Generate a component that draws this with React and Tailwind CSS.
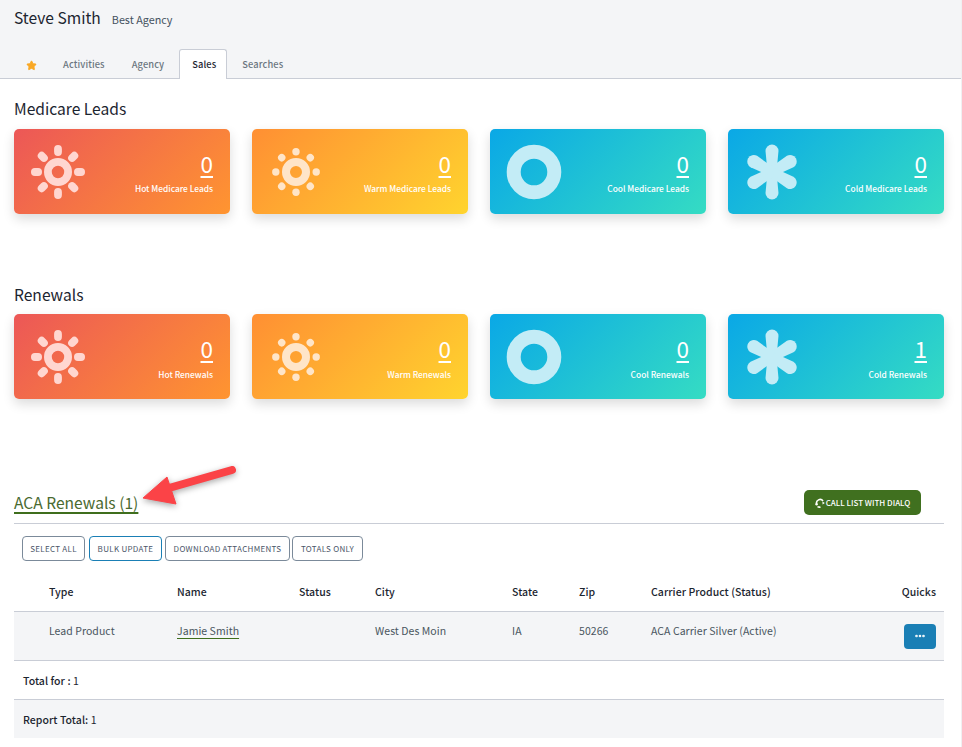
import React from 'react';
import { Star, Ellipsis } from 'lucide-react';

const HotIcon = () => (
  <svg width="56" height="56" viewBox="0 0 56 56" fill="#ffd6d0">
    <circle cx="28" cy="28" r="10.1" fill="none" stroke="#ffd6d0" strokeWidth="7.8" />
    {[0, 45, 90, 135, 180, 225, 270, 315].map((a) => (
      <rect key={a} x="24.1" y="1" width="7.8" height="11" rx="3.9" transform={`rotate(${a} 28 28)`} />
    ))}
  </svg>
);

const WarmIcon = () => (
  <svg width="50" height="50" viewBox="0 0 50 50" fill="#ffe5c8">
    <circle cx="25" cy="25" r="10" fill="none" stroke="#ffe5c8" strokeWidth="8" />
    {[0, 45, 90, 135, 180, 225, 270, 315].map((a) => (
      <circle key={a} cx="25" cy="4.8" r="3.7" transform={`rotate(${a} 25 25)`} />
    ))}
  </svg>
);

const CoolIcon = () => (
  <svg width="56" height="56" viewBox="0 0 56 56">
    <circle cx="28" cy="28" r="20.3" fill="none" stroke="#c3ecf6" strokeWidth="14" />
  </svg>
);

const ColdIcon = () => (
  <svg width="54" height="56" viewBox="0 0 54 56" fill="#c3ecf6">
    <circle cx="27" cy="28" r="10" />
    {[0, 60, 120, 180, 240, 300].map((a) => (
      <path key={a} d="M22.5 28 L20.5 7 A6.5 6.5 0 1 1 33.5 7 L31.5 28 Z" transform={`rotate(${a} 27 28)`} />
    ))}
  </svg>
);

const DialIcon = () => (
  <svg width="10" height="10" viewBox="0 0 10 10" fill="none" stroke="currentColor" strokeWidth="1.6">
    <path d="M1.6 6 A3.6 3.6 0 0 1 8 3" />
    <path d="M2.5 8.6 A3.6 3.6 0 0 0 5.5 9" />
    <circle cx="1.6" cy="6.2" r="1.2" fill="currentColor" stroke="none" />
    <path d="M7.4 3.4 L9.8 5 L7.6 6.6 Z" fill="currentColor" stroke="none" />
  </svg>
);

const Card = ({ gradient, icon, iconClass, count, label, labelGap }) => (
  <div className={`h-[85px] rounded-[5px] flex items-center justify-between pr-[17px] shadow-[0_5px_12px_rgba(0,0,0,0.14)] ${gradient} ${iconClass}`}>
    {icon}
    <div className="text-right text-white">
      <a href="#" className="block text-[22.5px] leading-[30px] underline underline-offset-[3px] decoration-[2px]">{count}</a>
      <div className={`text-[8.4px] leading-[14px] font-medium ${labelGap}`}>{label}</div>
    </div>
  </div>
);

const hot = 'bg-linear-135/srgb from-[#ec5757] to-[#ff9530]';
const warm = 'bg-linear-135/srgb from-[#ff8f33] to-[#ffd42e]';
const cool = 'bg-linear-135/srgb from-[#0aa8e6] to-[#35dcc3]';

const CardRow = ({ names, counts, labelGap }) => (
  <div className="grid grid-cols-4 gap-[22px]">
    <Card gradient={hot} iconClass="pl-[16px]" icon={<HotIcon />} count={counts[0]} label={names[0]} labelGap={labelGap} />
    <Card gradient={warm} iconClass="pl-[19px]" icon={<WarmIcon />} count={counts[1]} label={names[1]} labelGap={labelGap} />
    <Card gradient={cool} iconClass="pl-[16px]" icon={<CoolIcon />} count={counts[2]} label={names[2]} labelGap={labelGap} />
    <Card gradient={cool} iconClass="pl-[17px]" icon={<ColdIcon />} count={counts[3]} label={names[3]} labelGap={labelGap} />
  </div>
);

const Btn = ({ children, active, className }) => (
  <button className={`h-[25px] rounded-[4px] bg-white border text-[8px] tracking-[0.3px] text-[#4a5568] ${active ? 'border-[#1a7fb5]' : 'border-[#7b8a9a]'} ${className}`}>
    {children}
  </button>
);

export default function App() {
  return (
    <div className="relative w-[962px] h-[747px] overflow-hidden bg-white border-r border-[#f0f0f2] text-[#4a5560] font-['Noto_Sans_CJK_JP','Source_Sans_Pro',sans-serif]">
      {/* Header */}
      <header className="h-[79px] bg-[#f4f5f7] border-b border-[#c9cdd6] px-[14px]">
        <div className="flex items-baseline gap-[11px] pt-[5px]">
          <span className="text-[15.6px] leading-[24px] text-[#1c2530]">Steve Smith</span>
          <span className="text-[10.8px] text-[#45525f]">Best Agency</span>
        </div>
        <nav className="flex items-stretch mt-[20px] h-[30px] text-[9.3px] font-medium tracking-[0.1px] text-[#6b7580]">
          <div className="w-[35px] flex items-center justify-center pt-[2px]"><Star size={11} fill="#f9a825" stroke="#f9a825" /></div>
          <a href="#" className="px-[14px] pt-[2px] flex items-center">Activities</a>
          <a href="#" className="px-[13px] pt-[2px] flex items-center">Agency</a>
          <a href="#" className="ml-[2px] pl-[12px] pr-[10px] pt-[1px] h-[30px] flex items-center bg-white border border-b-0 border-[#c9cdd6] rounded-t-[3px] text-[#1c2530]">Sales</a>
          <a href="#" className="px-[15px] pt-[2px] flex items-center">Searches</a>
        </nav>
      </header>

      <main className="px-[14px] w-[958px]">
        <h2 className="mt-[18px] mb-[9px] text-[15.6px] leading-[23px] font-normal text-[#1c2530]">Medicare Leads</h2>
        <CardRow
          labelGap="mt-[3px]"
          names={['Hot Medicare Leads', 'Warm Medicare Leads', 'Cool Medicare Leads', 'Cold Medicare Leads']}
          counts={[0, 0, 0, 0]}
        />
        <h2 className="mt-[69px] mb-[9px] text-[15.6px] leading-[22px] font-normal text-[#1c2530]">Renewals</h2>
        <CardRow
          labelGap="mt-[4px]"
          names={['Hot Renewals', 'Warm Renewals', 'Cool Renewals', 'Cold Renewals']}
          counts={[0, 0, 0, 1]}
        />

        {/* ACA Renewals */}
        <div className="mt-[81px] h-[44px] flex items-center justify-between border-b border-[#c9cdd6] pr-[23px]">
          <a href="#" className="mt-[2px] text-[15.6px] text-[#4a6a30] underline decoration-[#3f6e1d] decoration-[2px] underline-offset-[3px]">ACA Renewals (1)</a>
          <button className="h-[25px] w-[117px] mt-[2px] rounded-[5px] bg-[#40701f] text-white text-[8px] font-medium flex items-center justify-center gap-[1px]">
            <DialIcon />CALL LIST WITH DIALQ
          </button>
        </div>

        <div className="flex mt-[12px] ml-[8px]">
          <Btn className="w-[63px]">SELECT ALL</Btn>
          <Btn active className="w-[73px] ml-[4px]">BULK UPDATE</Btn>
          <Btn className="w-[125px] ml-[3px]">DOWNLOAD ATTACHMENTS</Btn>
          <Btn className="w-[71px] ml-[2px]">TOTALS ONLY</Btn>
        </div>

        <table className="mt-[12px] w-[930px] table-fixed text-[10.5px] tracking-[0.05px]">
          <colgroup>
            <col className="w-[163px]" />
            <col className="w-[122px]" />
            <col className="w-[76px]" />
            <col className="w-[137px]" />
            <col className="w-[67px]" />
            <col className="w-[72px]" />
            <col className="w-[225px]" />
            <col className="w-[68px]" />
          </colgroup>
          <thead>
            <tr className="h-[38px] border-b border-[#c9cdd6] text-left text-[#1c2530]">
              <th className="pl-[35px] font-medium">Type</th>
              <th className="font-medium">Name</th>
              <th className="font-medium">Status</th>
              <th className="font-medium">City</th>
              <th className="font-medium">State</th>
              <th className="font-medium">Zip</th>
              <th className="font-medium">Carrier Product (Status)</th>
              <th className="pr-[8px] text-right font-medium">Quicks</th>
            </tr>
          </thead>
          <tbody>
            <tr className="h-[49px] bg-[#f4f5f7] border-b border-[#c9cdd6]">
              <td className="pl-[35px] align-top pt-[11px]">Lead Product</td>
              <td className="align-top pt-[11px]"><a href="#" className="underline decoration-[#3f6e1d] underline-offset-[3px]">Jamie Smith</a></td>
              <td></td>
              <td className="align-top pt-[11px]">West Des Moin</td>
              <td className="align-top pt-[11px]">IA</td>
              <td className="align-top pt-[11px]">50266</td>
              <td className="align-top pt-[11px]">ACA Carrier Silver (Active)</td>
              <td className="pr-[8px] text-right align-top pt-[12px]">
                <button className="w-[32px] h-[25px] rounded-[4px] bg-[#1a7fb5] text-white inline-flex items-center justify-center">
                  <Ellipsis size={12} strokeWidth={3.2} />
                </button>
              </td>
            </tr>
            <tr className="h-[39px] border-b border-[#c9cdd6]">
              <td colSpan={8} className="pl-[9px] pt-[2px] text-[#1c2530] font-medium">Total for : <span className="font-normal">1</span></td>
            </tr>
            <tr className="h-[39px] bg-[#f4f5f7]">
              <td colSpan={8} className="pl-[9px] pt-[2px] text-[#1c2530] font-medium">Report Total: <span className="font-normal">1</span></td>
            </tr>
          </tbody>
        </table>
      </main>

      {/* annotation arrow */}
      <svg className="absolute left-[135px] top-[455px] drop-shadow-[0_2px_3px_rgba(0,0,0,0.35)]" width="110" height="60" viewBox="0 0 110 60">
        <path d="M97 15 L34 33" stroke="#fb4347" strokeWidth="8" strokeLinecap="round" fill="none" />
        <path d="M8 43 L32 22 L41 49 Z" fill="#fb4347" strokeLinejoin="round" stroke="#fb4347" />
      </svg>
    </div>
  );
}
